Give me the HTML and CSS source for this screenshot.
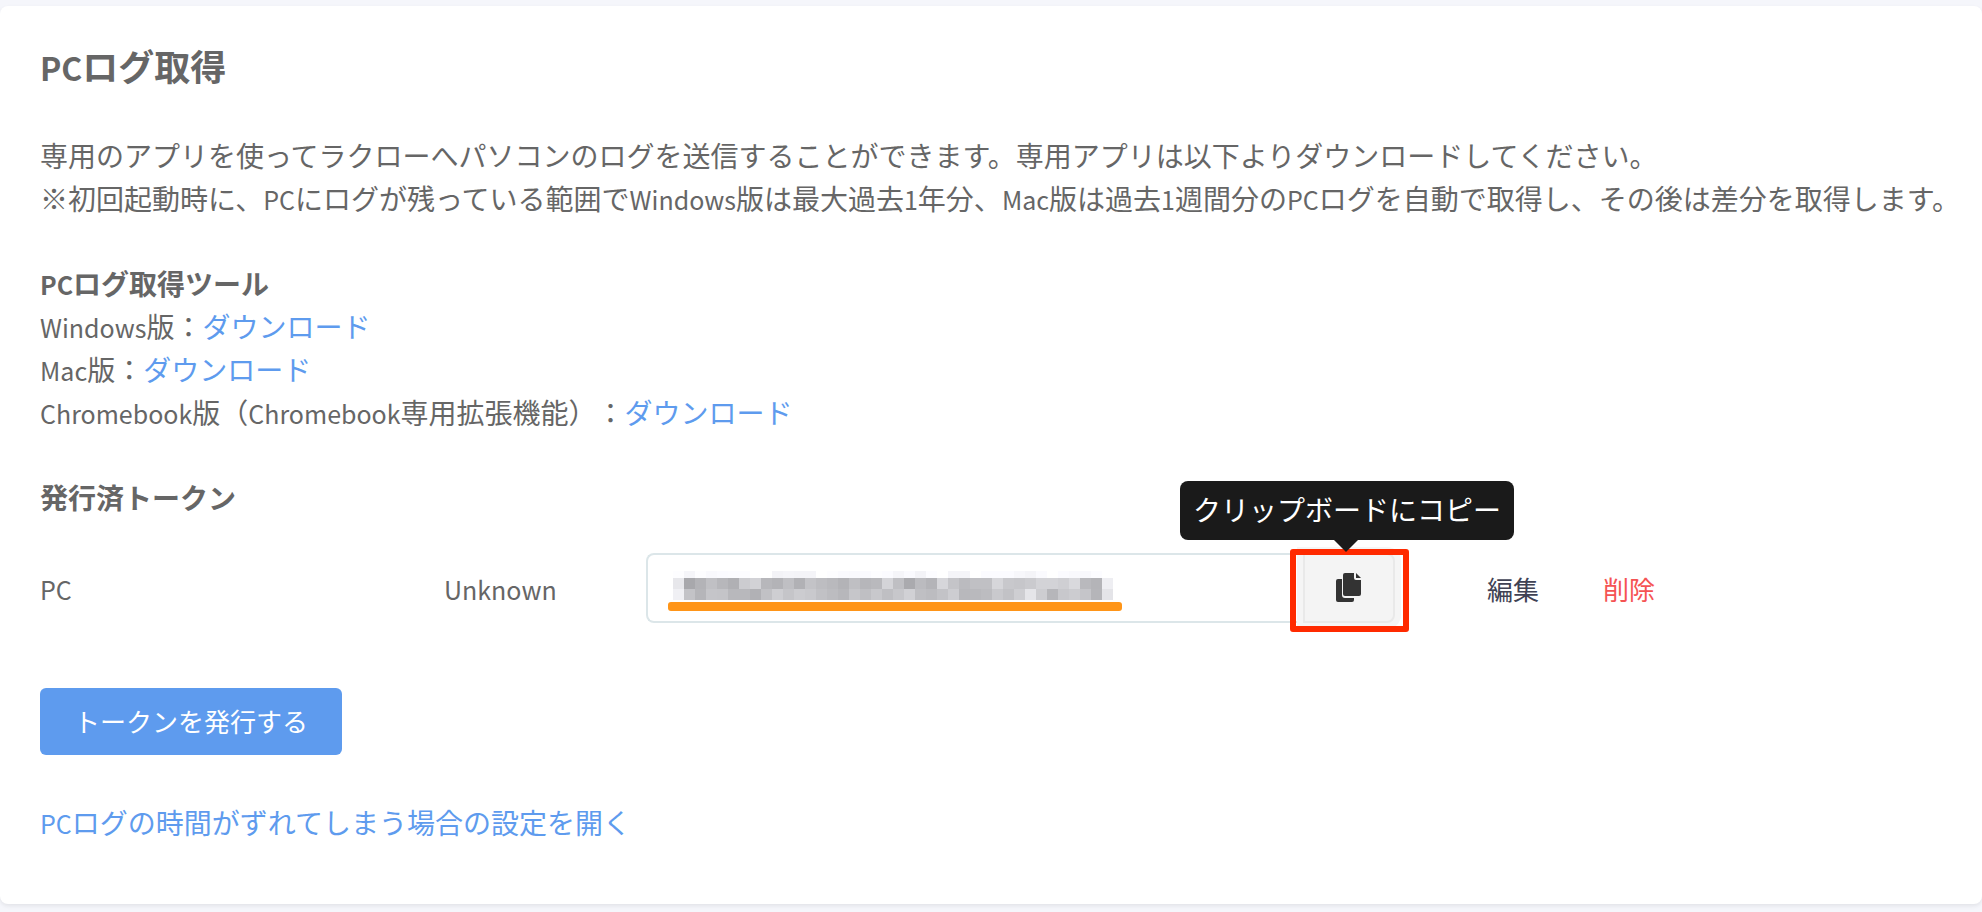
FILE: index.html
```
<!DOCTYPE html>
<html lang="ja">
<head>
  <meta charset="utf-8">
  <title>PCログ取得</title>
  <link rel="stylesheet" href="styles.css">
</head>
<body>
  <main class="card">
    <h1><span class="latin">PC</span>ログ取得</h1>

    <div class="description">
      <p>専用のアプリを使ってラクローへパソコンのログを送信することができます。専用アプリは以下よりダウンロードしてください。</p>
      <p>※初回起動時に、<span class="latin">PC</span>にログが残っている範囲で<span class="latin">Windows</span>版は最大過去<span class="latin">1</span>年分、<span class="latin">Mac</span>版は過去<span class="latin">1</span>週間分の<span class="latin">PC</span>ログを自動で取得し、その後は差分を取得します。</p>
    </div>

    <section class="section">
      <h2><span class="latin">PC</span>ログ取得ツール</h2>
      <ul class="downloads">
        <li><span class="latin">Windows</span>版：<a href="#">ダウンロード</a></li>
        <li><span class="latin">Mac</span>版：<a href="#">ダウンロード</a></li>
        <li><span class="latin">Chromebook</span>版（<span class="latin">Chromebook</span>専用拡張機能）：<a href="#">ダウンロード</a></li>
      </ul>
    </section>

    <section class="section">
      <h2>発行済トークン</h2>
      <table class="tokens">
        <colgroup>
          <col class="col-type">
          <col class="col-device">
          <col class="col-token">
          <col class="col-edit">
          <col class="col-delete">
        </colgroup>
        <tbody>
          <tr>
            <td><span class="latin">PC</span></td>
            <td><span class="latin">Unknown</span></td>
            <td class="token-cell">
              <div class="token">
                <input type="text" class="token-input" aria-label="トークン" readonly>
                <svg class="token-mask" id="mask" width="440" height="30" viewBox="0 0 440 30" shape-rendering="crispEdges" aria-hidden="true"></svg>
                <span class="token-underline"></span>
                <button type="button" class="copy-button" aria-labelledby="copyTip">
                  <svg class="copy-icon" viewBox="0 0 26 30" aria-hidden="true">
                    <path d="M2 6h4v16a3 3 0 0 0 3 3h9v2a2 2 0 0 1-2 2H2a2 2 0 0 1-2-2V8a2 2 0 0 1 2-2z"/>
                    <path d="M9 0h9v5a2 2 0 0 0 2 2h5v14a2 2 0 0 1-2 2H9a2 2 0 0 1-2-2V2a2 2 0 0 1 2-2z"/>
                    <path d="M20 0l5 5h-5z"/>
                  </svg>
                </button>
                <span class="highlight"></span>
                <span class="tooltip" id="copyTip" role="tooltip">クリップボードにコピー</span>
              </div>
            </td>
            <td><a class="edit" href="#">編集</a></td>
            <td><a class="delete" href="#">削除</a></td>
          </tr>
        </tbody>
      </table>
    </section>

    <button type="button" class="button">トークンを発行する</button>

    <p class="help"><a href="#"><span class="latin">PC</span>ログの時間がずれてしまう場合の設定を開く</a></p>
  </main>

  <script src="mask.js"></script>
</body>
</html>
```

FILE: styles.css
```
* {
  box-sizing: border-box;
}

body {
  margin: 0;
  padding: 6px 0 8px;
  background: #f5f6fb;
  color: #666;
  font-family: "Noto Sans CJK JP", sans-serif;
  font-size: 28px;
  line-height: 43px;
  text-spacing-trim: space-all;
}

a {
  color: #5e9bee;
  text-decoration: none;
}

/* latin letters run a little smaller than the kana */
.latin {
  font-size: 25px;
  line-height: 1;
}

.card {
  padding: 35px 20px 60px 40px;
  background: #fff;
  border-radius: 8px;
  box-shadow: 0 2px 4px rgba(0, 0, 0, 0.08);
}

h1 {
  margin: 0 0 45px;
  font-size: 36px;
  font-weight: 700;
  line-height: 48px;
}

h1 .latin {
  font-size: 32px;
}

h2 {
  margin: 0;
  font-size: 28px;
  font-weight: 700;
}

.description {
  margin-bottom: 42px;
}

.description p {
  margin: 0;
}

.section {
  margin-bottom: 42px;
}

.downloads {
  margin: 0;
  padding: 0;
  list-style: none;
}

/* issued tokens */
.tokens {
  width: 100%;
  margin-top: 34px;
  table-layout: fixed;
  border-collapse: collapse;
  font-size: 26px;
}

.tokens td {
  padding: 0;
  vertical-align: middle;
}

.col-type {
  width: 404px;
}

.col-device {
  width: 202px;
}

.col-edit {
  width: 116px;
}

.col-delete {
  width: 359px;
}

.tokens .token-cell {
  padding-right: 92px;
}

.token {
  position: relative;
  display: flex;
}

.token-input {
  flex: 1;
  min-width: 0;
  height: 70px;
  padding: 0 26px;
  border: 2px solid #dce6e9;
  border-right: 0;
  border-radius: 8px 0 0 8px;
  background: #fff;
  color: #666;
  font: inherit;
}

.token-mask {
  position: absolute;
  left: 27px;
  top: 18px;
}

.token-underline {
  position: absolute;
  left: 22px;
  top: 49px;
  width: 454px;
  height: 9px;
  border-radius: 3px;
  background: #ff9518;
}

.copy-button {
  display: flex;
  align-items: center;
  justify-content: center;
  width: 92px;
  height: 70px;
  padding: 0 20px;
  border: 2px solid #e9e9e9;
  border-radius: 0 8px 8px 0;
  background: #f4f4f4;
  box-shadow: 0 0 0 6px #f5f5f5;
  cursor: pointer;
}

.copy-icon {
  width: 26px;
  height: 30px;
  fill: #333;
}

.highlight {
  position: absolute;
  right: -14px;
  top: -4px;
  width: 119px;
  height: 83px;
  border: 6px solid #ff2a00;
  border-radius: 3px;
  pointer-events: none;
}

.tooltip {
  position: absolute;
  right: -119px;
  bottom: 83px;
  padding: 7px 13px 9px;
  border-radius: 8px;
  background: #1a1a1a;
  color: #fff;
  font-size: 28px;
  white-space: nowrap;
}

.tooltip::after {
  content: "";
  position: absolute;
  left: 50%;
  top: 100%;
  margin-left: -13px;
  border: 12px solid transparent;
  border-top-color: #1a1a1a;
  border-bottom: 0;
}

.edit {
  color: #3f4254;
}

.delete {
  color: #f55353;
}

.button {
  display: block;
  margin-top: 65px;
  padding: 11px 34px 13px;
  border: 0;
  border-radius: 6px;
  background: #5e9bee;
  color: #fff;
  font-family: inherit;
  font-size: 26px;
  line-height: 43px;
  cursor: pointer;
}

.help {
  margin: 46px 0 0;
}
```

FILE: mask.js
```
const mask = document.getElementById('mask');

// grey level of each mosaic cell, one row per line
const rows = [
  { y: 0, height: 7, cells: 'fd f5 fd f9 fb fc fc ff ff f3 f5 f4 f4 ff fd fa f9 fa fd fb f5 fa f3 fc ff f4 f4 ff fb fb fb f7 f4 fa ff fb f9 f8 fc ff' },
  { y: 7, height: 11, cells: 'e7 a8 b3 c0 b7 b0 cc d2 b7 b3 bf b1 c3 bd b9 b3 bf b6 b9 d4 bf aa bb b4 d6 c4 bb c0 c0 d6 c8 c6 ca d3 d3 cf d9 b9 b4 ee' },
  { y: 18, height: 11, cells: 'f0 c3 b5 c5 c4 b8 b8 b1 c1 ce c5 cc c9 c1 bc b7 c6 bf c8 bf c7 d1 bf bc c3 cd b8 b9 bc c9 c2 ce e5 cd b6 c8 cc c5 b5 e4' }
];

rows.forEach((row) => {
  row.cells.split(' ').forEach((level, i) => {
    // slight blue tint
    const blue = Math.min(parseInt(level, 16) + 4, 255).toString(16);
    const rect = document.createElementNS('http://www.w3.org/2000/svg', 'rect');
    rect.setAttribute('x', i * 11);
    rect.setAttribute('y', row.y);
    rect.setAttribute('width', 11);
    rect.setAttribute('height', row.height);
    rect.setAttribute('fill', `#${level}${level}${blue}`);
    mask.appendChild(rect);
  });
});
```
